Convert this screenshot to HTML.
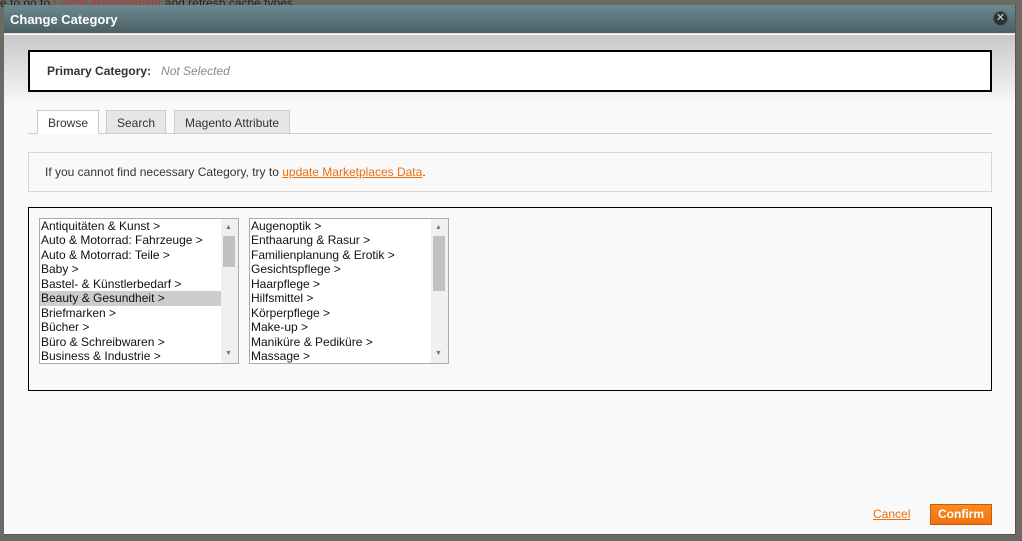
<!DOCTYPE html>
<html><head><meta charset="utf-8"><style>
*{box-sizing:border-box;margin:0;padding:0}
body{width:1022px;height:541px;background:#6c6b63;font-family:"Liberation Sans",Arial,sans-serif;position:relative;overflow:hidden;font-size:12px;color:#2f2f2f}
.bgtxt{position:absolute;left:0;top:-4px;color:#222;font-size:12px;white-space:nowrap}
.modal{position:absolute;left:4px;top:5px;width:1012px;height:530px;background:#f9f9f9;border-right:1px solid #555;border-bottom:1px solid #555}
.title{height:29px;background:linear-gradient(#6b8a90,#4b5f64);color:#fff;font-weight:bold;font-size:13px;padding:7px 0 0 6px;border-bottom:1px solid #e0e0e0}
.close{position:absolute;right:7px;top:6px;width:15px;height:15px;border-radius:50%;background:#2a3234;border:1px solid #555;color:#ddd;font-size:11px;line-height:13px;text-align:center}
.grad{position:absolute;left:0;top:30px;right:0;height:70px;background:linear-gradient(#c8c8c8,#f9f9f9)}
.prim{position:absolute;left:24px;top:45px;width:964px;height:42px;background:#fff;border:2px solid #000;padding:12px 0 0 17px;font-size:12px}
.prim b{color:#333}
.prim i{color:#888;margin-left:10px}
.tabs{position:absolute;left:24px;top:96px;width:964px;height:33px;border-bottom:1px solid #ccc}
.tab{position:absolute;top:9px;height:24px;border:1px solid #ccc;background:#e6e6e6;padding:5px 10px;font-size:12px;color:#333}
.tab.a{background:#fff;border-bottom-color:#fff}
.info{position:absolute;left:24px;top:147px;width:964px;height:40px;border:1px solid #d6d6d6;padding:12px 0 0 16px;color:#333}
.info a{color:#eb6e0f;text-decoration:underline}
.box{position:absolute;left:24px;top:202px;width:964px;height:184px;border:1px solid #000;background:#f9f9f9}
.list{position:absolute;top:10px;width:200px;height:146px;border:1px solid #aaa;background:#fff;overflow:hidden}
.list .it{height:14.45px;line-height:14px;font-size:12px;color:#111;padding-left:1px;width:181px;white-space:nowrap}
.list .s{background:#cdcdcd}
.sb{position:absolute;right:0;top:0;width:17px;height:100%;background:#f0f0f0}
.th{position:absolute;left:2px;width:12px;background:#c1c1c1}
.ar{position:absolute;left:4px;font-size:7px;color:#777;line-height:8px}
.cancel{position:absolute;left:873px;top:507px;color:#eb6e0f;text-decoration:underline;font-size:12px}
.confirm{position:absolute;left:930px;top:504px;width:62px;height:21px;background:linear-gradient(#fb8a1e,#f07210);border:1px solid #c85a00;color:#fff;font-weight:bold;font-size:12px;text-align:center;line-height:19px}
</style></head><body>
<div class="bgtxt">e to go to <span style="color:#b33">Cache Management</span> and refresh cache types.</div>
<div class="modal">
<div class="title">Change Category</div>
<div class="close">✕</div>
<div class="grad"></div>
<div class="prim"><b>Primary Category:</b><i>Not Selected</i></div>
<div class="tabs">
<div class="tab a" style="left:9px">Browse</div>
<div class="tab" style="left:78px">Search</div>
<div class="tab" style="left:146px">Magento Attribute</div>
</div>
<div class="info">If you cannot find necessary Category, try to <a>update Marketplaces Data</a>.</div>
<div class="box">
<div class="list" style="left:10px">
<div class="it">Antiquitäten &amp; Kunst &gt;</div><div class="it">Auto &amp; Motorrad: Fahrzeuge &gt;</div><div class="it">Auto &amp; Motorrad: Teile &gt;</div><div class="it">Baby &gt;</div><div class="it">Bastel- &amp; Künstlerbedarf &gt;</div><div class="it s">Beauty &amp; Gesundheit &gt;</div><div class="it">Briefmarken &gt;</div><div class="it">Bücher &gt;</div><div class="it">Büro &amp; Schreibwaren &gt;</div><div class="it">Business &amp; Industrie &gt;</div>
<div class="sb"><span class="ar" style="top:5px">▲</span><div class="th" style="top:17px;height:31px"></div><span class="ar" style="bottom:5px">▼</span></div>
</div>
<div class="list" style="left:220px">
<div class="it">Augenoptik &gt;</div><div class="it">Enthaarung &amp; Rasur &gt;</div><div class="it">Familienplanung &amp; Erotik &gt;</div><div class="it">Gesichtspflege &gt;</div><div class="it">Haarpflege &gt;</div><div class="it">Hilfsmittel &gt;</div><div class="it">Körperpflege &gt;</div><div class="it">Make-up &gt;</div><div class="it">Maniküre &amp; Pediküre &gt;</div><div class="it">Massage &gt;</div>
<div class="sb"><span class="ar" style="top:5px">▲</span><div class="th" style="top:17px;height:55px"></div><span class="ar" style="bottom:5px">▼</span></div>
</div>
</div>
</div>
<div class="cancel">Cancel</div>
<div class="confirm">Confirm</div>
</body></html>
